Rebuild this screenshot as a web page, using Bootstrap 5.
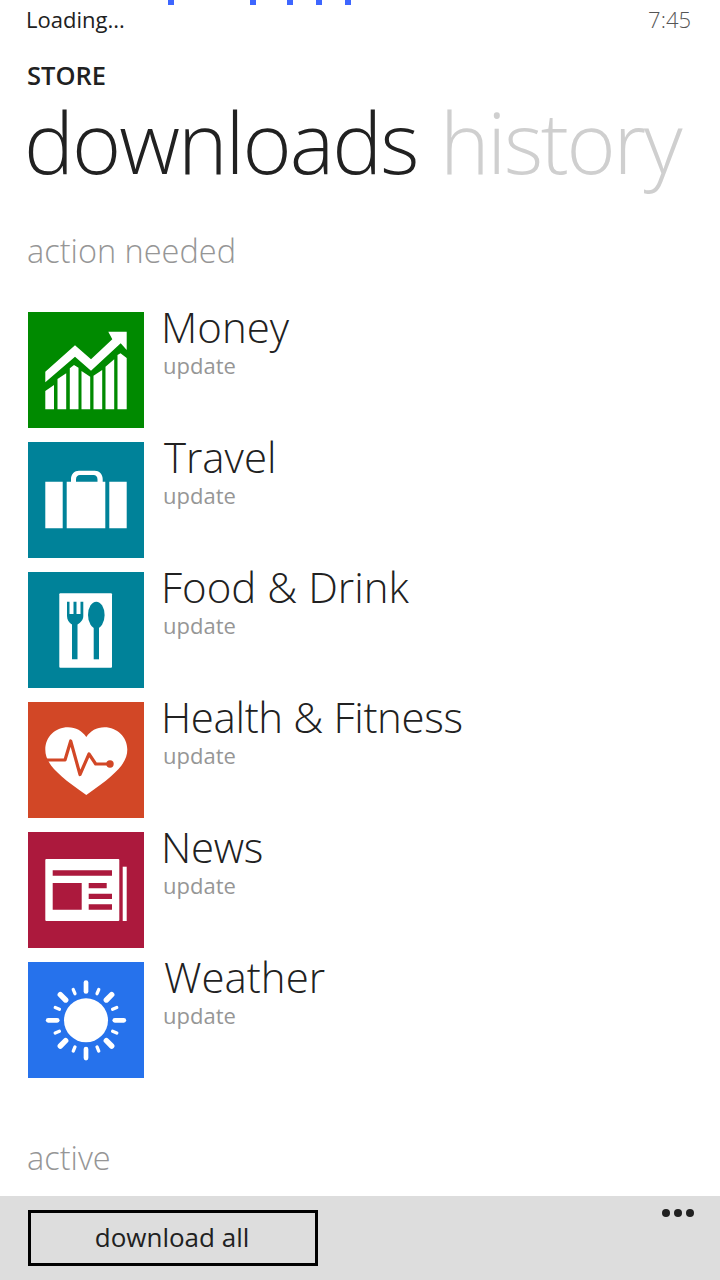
<!DOCTYPE html>
<html lang="en">
<head>
    <meta charset="UTF-8">
    <meta name="viewport" content="width=device-width, initial-scale=1.0">
    <title>Store - downloads</title>
    <link rel="stylesheet" href="https://cdn.jsdelivr.net/npm/bootstrap@5.3.0/dist/css/bootstrap.min.css">
    <style>
        body {
            width: 720px;
            height: 1280px;
            overflow: hidden;
            background: #fff;
            color: #212121;
            font-family: "Open Sans", "Noto Sans", sans-serif;
        }
        .phone-screen {
            height: 1280px;
            position: relative;
        }
        .load-dot {
            position: absolute;
            top: 0;
            width: 6px;
            height: 5px;
            background: #3d66ff;
        }
        .status-bar {
            height: 41px;
            padding: 4px 29px 0 26px;
            font-size: 22px;
            line-height: 30px;
        }
        .status-time {
            color: #555;
            font-weight: 300;
        }
        .app-title {
            margin: 17px 0 0 27px;
            font-size: 25.5px;
            line-height: 34px;
            font-weight: 600;
        }
        .pivot {
            margin: 0 0 0 24px;
            font-size: 84px;
            line-height: 100px;
            font-weight: 300;
            letter-spacing: -2px;
            white-space: nowrap;
        }
        .pivot-off {
            color: #cfcfcf;
            margin-left: 3px;
            letter-spacing: -2.3px;
        }
        .group-title {
            color: #969696;
            font-size: 32.5px;
            line-height: 44px;
            font-weight: 300;
            margin: 37px 0 0 27px;
        }
        .app-list {
            margin: 39px 0 0 28px;
        }
        .app-row {
            height: 116px;
            margin-bottom: 14px;
        }
        .app-tile {
            width: 116px;
            height: 116px;
            flex: none;
        }
        .app-tile svg {
            display: block;
        }
        .app-name {
            font-size: 42px;
            line-height: 30px;
            font-weight: 300;
            margin-left: 17px;
            white-space: nowrap;
        }
        .name-t {
            margin-left: 20px;
        }
        .name-tight {
            letter-spacing: -.35px;
        }
        .app-state {
            font-size: 22px;
            line-height: 28px;
            color: #969696;
            margin: 9px 0 0 19px;
        }
        .tile-green { background: #008a00; }
        .tile-teal { background: #008299; }
        .tile-orange { background: #d24726; }
        .tile-maroon { background: #ac193d; }
        .tile-blue { background: #2672ec; }
        .active-title {
            margin-top: 58px;
        }
        .app-bar {
            position: absolute;
            left: 0;
            right: 0;
            bottom: 0;
            height: 84px;
            background: #dddddd;
            padding: 14px 26px 14px 28px;
        }
        .bar-btn {
            width: 290px;
            height: 56px;
            border: 3px solid #000;
            border-radius: 0;
            padding: 0 2px 3px 0;
            background: transparent;
            color: #212121;
            font-size: 26px;
            line-height: 1;
        }
        .bar-dots {
            gap: 4px;
            margin-top: -1px;
        }
        .bar-dots span {
            width: 8px;
            height: 8px;
            border-radius: 50%;
            background: #212121;
        }
    </style>
</head>
<body>
    <div class="phone-screen">
        <i class="load-dot" style="left: 168px"></i>
        <i class="load-dot" style="left: 250px"></i>
        <i class="load-dot" style="left: 287px"></i>
        <i class="load-dot" style="left: 316px"></i>
        <i class="load-dot" style="left: 345px"></i>

        <div class="status-bar d-flex justify-content-between">
            <span>Loading...</span>
            <span class="status-time">7:45</span>
        </div>
        <div class="app-title">STORE</div>
        <div class="pivot">downloads<span class="pivot-off"> history</span></div>
        <div class="group-title">action needed</div>

        <div class="app-list">
            <div class="app-row d-flex">
                <div class="app-tile tile-green">
                    <svg width="116" height="116" viewBox="0 0 116 116" fill="#fff">
                        <path d="M17.3 59.7 47 33.3 63 47.3 84.3 27.3 80.3 19.7H98.7V38L92.7 31.3 63 58.7 47 44.7 17.3 70.3Z"/>
                        <path d="M17.3 79 26 73V97.3H17.3ZM29.5 67 38.2 61.3V97.3H29.5ZM41.8 56.3 46 53 50.5 55.7V97.3H41.8ZM53.5 59 62.2 64.7V97.3H53.5ZM65.5 63.7 74.2 58V97.3H65.5ZM77.5 54.7 86.2 47.3V97.3H77.5ZM89.5 43 92.5 41.3 98.7 46V97.3H89.5Z"/>
                    </svg>
                </div>
                <div>
                    <div class="app-name">Money</div>
                    <div class="app-state">update</div>
                </div>
            </div>
            <div class="app-row d-flex">
                <div class="app-tile tile-teal">
                    <svg width="116" height="116" viewBox="0 0 116 116" fill="#fff">
                        <path d="M17.3 39.7H34.7V86.3H17.3ZM81.3 39.7H98.7V86.3H81.3ZM38.7 39.7H43V37C43 32 46.5 28.7 51 28.7H66.7C71.2 28.7 74.7 32 74.7 37V39.7H77.3V86.3H38.7ZM48 39.7H69.5V37.5C69.5 34.5 68 33 65.5 33H52C49.5 33 48 34.5 48 37.5Z" fill-rule="evenodd"/>
                    </svg>
                </div>
                <div>
                    <div class="app-name name-t">Travel</div>
                    <div class="app-state">update</div>
                </div>
            </div>
            <div class="app-row d-flex">
                <div class="app-tile tile-teal">
                    <svg width="116" height="116" viewBox="0 0 116 116">
                        <rect x="31.3" y="21.3" width="52.7" height="74.4" rx="1" fill="#fff"/>
                        <path d="M39 29.7H41.5V42H45.5V29.7H48.5V42H52.5V29.7H55.3V44C55.3 48 52.5 50.5 49.5 52.5V87.3H44V52.5C41 50.5 39 48 39 44Z" fill="#008299"/>
                        <ellipse cx="68.3" cy="43" rx="8.3" ry="13.3" fill="#008299"/>
                        <rect x="65.7" y="50" width="5.3" height="37.3" fill="#008299"/>
                    </svg>
                </div>
                <div>
                    <div class="app-name">Food &amp; Drink</div>
                    <div class="app-state">update</div>
                </div>
            </div>
            <div class="app-row d-flex">
                <div class="app-tile tile-orange">
                    <svg width="116" height="116" viewBox="0 0 116 116">
                        <path d="M58.3 35C54 29 48 25.3 40 25.3 27 25.3 17.3 35 17.3 47.5 17.3 61 28 72 58.3 93 88.5 72 99.3 61 99.3 47.5 99.3 35 89 25.3 76.5 25.3 68.5 25.3 62.5 29 58.3 35Z" fill="#fff"/>
                        <path d="M15 58H37L42.7 39 52 72.5 61 52 67.7 62H82" fill="none" stroke="#d24726" stroke-width="3.2" stroke-linejoin="round"/>
                        <circle cx="82" cy="62" r="3.7" fill="#d24726"/>
                    </svg>
                </div>
                <div>
                    <div class="app-name name-tight">Health &amp; Fitness</div>
                    <div class="app-state">update</div>
                </div>
            </div>
            <div class="app-row d-flex">
                <div class="app-tile tile-maroon">
                    <svg width="116" height="116" viewBox="0 0 116 116">
                        <rect x="17.3" y="27" width="74" height="62" rx="1" fill="#fff"/>
                        <rect x="94.7" y="34.7" width="4" height="54.3" fill="#fff"/>
                        <path d="M24.7 38.3H84V43.7H24.7ZM24.7 51H53.7V77.7H24.7ZM60.7 51H78.7V56.3H60.7ZM60.7 61.7H84V67H60.7ZM60.7 72.3H84V77.7H60.7Z" fill="#ac193d"/>
                    </svg>
                </div>
                <div>
                    <div class="app-name name-tight">News</div>
                    <div class="app-state">update</div>
                </div>
            </div>
            <div class="app-row d-flex">
                <div class="app-tile tile-blue">
                    <svg width="116" height="116" viewBox="0 0 116 116" fill="#fff" stroke="#fff" stroke-linecap="round">
                        <circle cx="58" cy="58.3" r="22" stroke="none"/>
                        <g stroke-width="4.7">
                            <path d="M58 20.5V29.5"/>
                            <path d="M58 20.5V29.5" transform="rotate(90 58 58.3)"/>
                            <path d="M58 20.5V29.5" transform="rotate(180 58 58.3)"/>
                            <path d="M58 20.5V29.5" transform="rotate(270 58 58.3)"/>
                        </g>
                        <g stroke-width="5.5">
                            <path d="M58 22V29.5" transform="rotate(45 58 58.3)"/>
                            <path d="M58 22V29.5" transform="rotate(135 58 58.3)"/>
                            <path d="M58 22V29.5" transform="rotate(225 58 58.3)"/>
                            <path d="M58 22V29.5" transform="rotate(315 58 58.3)"/>
                        </g>
                        <g stroke-width="3.3">
                            <path d="M58 25V29.5" transform="rotate(22.5 58 58.3)"/>
                            <path d="M58 25V29.5" transform="rotate(67.5 58 58.3)"/>
                            <path d="M58 25V29.5" transform="rotate(112.5 58 58.3)"/>
                            <path d="M58 25V29.5" transform="rotate(157.5 58 58.3)"/>
                            <path d="M58 25V29.5" transform="rotate(202.5 58 58.3)"/>
                            <path d="M58 25V29.5" transform="rotate(247.5 58 58.3)"/>
                            <path d="M58 25V29.5" transform="rotate(292.5 58 58.3)"/>
                            <path d="M58 25V29.5" transform="rotate(337.5 58 58.3)"/>
                        </g>
                    </svg>
                </div>
                <div>
                    <div class="app-name name-t">Weather</div>
                    <div class="app-state">update</div>
                </div>
            </div>
        </div>

        <div class="group-title active-title">active</div>

        <div class="app-bar d-flex justify-content-between align-items-start">
            <button type="button" class="btn bar-btn">download all</button>
            <div class="bar-dots d-flex">
                <span></span><span></span><span></span>
            </div>
        </div>
    </div>
</body>
</html>
